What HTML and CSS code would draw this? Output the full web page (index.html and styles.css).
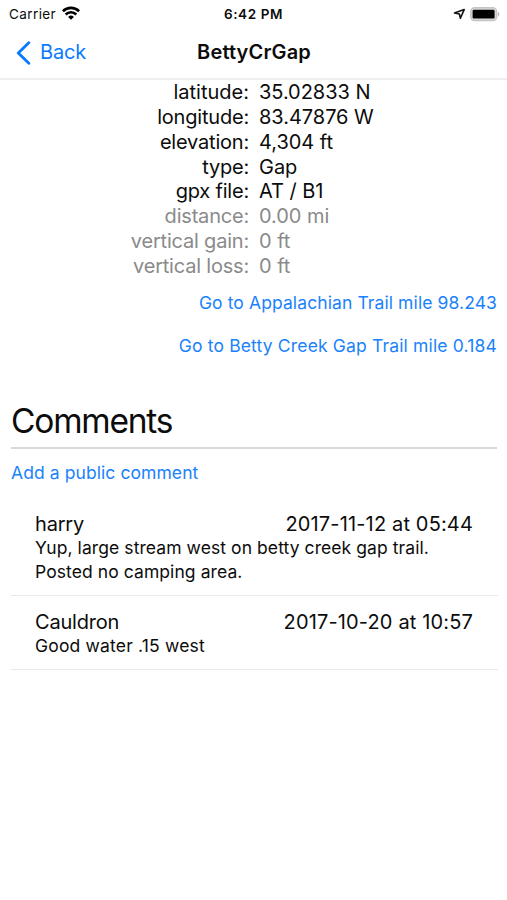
FILE: index.html
```html
<!DOCTYPE html>
<html lang="en">
<head>
<meta charset="utf-8">
<title>BettyCrGap</title>
<link rel="stylesheet" href="styles.css">
</head>
<body>
<header class="top">
  <div class="status">
    <div class="carrier"><span>Carrier</span>
      <svg class="wifi" width="18" height="14" viewBox="0 0 18 14" fill="none" stroke="#000" stroke-width="2.6"><path d="M.9 5.2a11.6 11.6 0 0 1 16.2 0M3.7 8.5a7.5 7.5 0 0 1 10.6 0"/><path d="M9 13.8 6.1 10.9a4.1 4.1 0 0 1 5.8 0z" fill="#000" stroke="none"/></svg>
    </div>
    <div class="time">6:42 PM</div>
    <div class="indicators">
      <svg width="13" height="12" viewBox="0 0 13 12" fill="none" stroke="#111" stroke-width="1.6" stroke-linejoin="round"><path d="M1.5 5 11.2 1.6 7.4 10.2 6.4 6z"/></svg>
      <svg width="30" height="15" viewBox="0 0 30 15"><rect x=".8" y=".8" width="25.8" height="12.8" rx="3.8" fill="#ddd" stroke="#c4c4c4" stroke-width="1.5"/><rect x="2.6" y="2.8" width="22" height="8.8" rx="1.4" fill="#000"/><path d="M27.8 4.8c2.2.8 2.2 4 0 4.8z" fill="#bbb"/></svg>
    </div>
  </div>
  <nav class="nav">
    <a class="back"><svg width="15" height="24" viewBox="0 0 15 24" fill="none" stroke="#0a7aff" stroke-width="2.9" stroke-linecap="round" stroke-linejoin="round"><path d="M12.8 1.8 2.3 12l10.5 10.2"/></svg><span>Back</span></a>
    <h1 class="title">BettyCrGap</h1>
  </nav>
</header>
<main>
  <dl class="details">
    <dt class="lat">latitude:</dt><dd>35.02833 N</dd>
    <dt>longitude:</dt><dd>83.47876 W</dd>
    <dt>elevation:</dt><dd>4,304 ft</dd>
    <dt>type:</dt><dd>Gap</dd>
    <dt>gpx file:</dt><dd>AT / B1</dd>
    <dt class="muted">distance:</dt><dd class="muted">0.00 mi</dd>
    <dt class="muted">vertical gain:</dt><dd class="muted">0 ft</dd>
    <dt class="muted">vertical loss:</dt><dd class="muted">0 ft</dd>
  </dl>
  <div class="links">
    <a class="link-at">Go to Appalachian Trail mile 98.243</a>
    <a class="link-bc">Go to Betty Creek Gap Trail mile 0.184</a>
  </div>
  <section class="comments">
    <h2>Comments</h2>
    <a class="add">Add a public comment</a>
    <article class="comment">
      <div class="meta"><span>harry</span><time>2017-11-12 at 05:44</time></div>
      <p>Yup, large stream west on betty creek gap trail.<br>Posted no camping area.</p>
    </article>
    <article class="comment">
      <div class="meta"><span>Cauldron</span><time>2017-10-20 at 10:57</time></div>
      <p>Good water .15 west</p>
    </article>
  </section>
</main>
</body>
</html>
```
FILE: styles.css
```css
* { box-sizing: border-box; margin: 0; padding: 0; }
body { background: #fff; color: #0c0c0c; font-family: Inter, "Liberation Sans", sans-serif; font-size: 20px; }
svg { display: block; }
.top { height: 80px; border-bottom: 2px solid #efefef; }
.status { display: grid; grid-template-columns: 1fr auto 1fr; height: 27px; padding: 0 7px 0 9px; line-height: 28px; font-size: 13.5px; }
.carrier { display: flex; align-items: center; gap: 6px; letter-spacing: .4px; }
.wifi { margin-bottom: 3px; }
.time { font-weight: 600; letter-spacing: .6px; padding-right: 2px; }
.indicators { display: flex; align-items: center; justify-content: flex-end; gap: 4px; }
.nav { display: grid; grid-template-columns: 1fr auto 1fr; height: 51px; padding: 0 0 0 16px; line-height: 51px; }
.back { display: flex; align-items: center; gap: 9px; color: #0a7aff; letter-spacing: -.15px; }
.title { font-size: 20px; font-weight: 600; padding-right: 15px; letter-spacing: .15px; }
.details { display: grid; grid-template-columns: 249px 1fr; column-gap: 10px; line-height: 24.86px; }
.details dt { text-align: right; letter-spacing: -.2px; }
.details .lat { letter-spacing: 0; }
.details dd { letter-spacing: -.04px; }
.muted { color: #8a8a8a; }
.links { display: flex; flex-direction: column; align-items: flex-end; padding: 2px 10px 0 0; font-size: 17.5px; line-height: 43px; color: #1a82fb; }
.link-at { letter-spacing: .1px; }
.link-bc { letter-spacing: .16px; }
.comments { padding: 26px 9px 0 11px; }
.comments h2 { font-size: 33.5px; font-weight: 400; line-height: 56px; height: 56px; margin-right: 1px; letter-spacing: -1.2px; border-bottom: 2px solid #d9d9d9; }
.add { display: block; font-size: 17.5px; line-height: 48px; margin-bottom: 1px; color: #1a82fb; letter-spacing: .08px; }
.comment { padding: 14px 25px 10px 24px; border-bottom: 1px solid #e9e9e9; }
.comment + .comment { padding-bottom: 11px; }
.meta { display: flex; justify-content: space-between; line-height: 24px; }
.meta span { letter-spacing: -.2px; }
.meta time { letter-spacing: .15px; }
.comment p { font-size: 17.5px; line-height: 24.4px; letter-spacing: .08px; }
.comment + .comment p { letter-spacing: .18px; }
```
